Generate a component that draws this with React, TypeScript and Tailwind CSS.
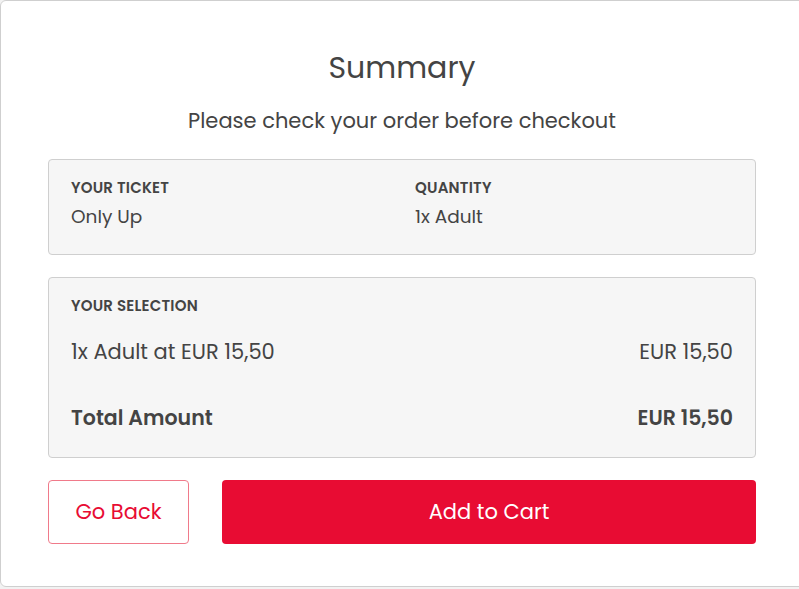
import React from "react";

const font = { fontFamily: "Poppins, 'Open Sans', 'Liberation Sans', sans-serif" };

function Label({ children }: { children: React.ReactNode }) {
  return (
    <p className="text-[15px] font-semibold uppercase tracking-[0.2px] text-[#444] leading-[20px]">
      {children}
    </p>
  );
}

export default function App() {
  return (
    <div className="w-full h-[589px] overflow-hidden bg-[#f2f2f2]" style={font}>
      <div className="w-[810px] h-[587px] bg-white border border-[#cfcfcf] rounded-[6px] pl-[47px] pt-[45px]">
        <div className="w-[708px]">
          <h1 className="text-center text-[30px] leading-[44px] text-[#444]">Summary</h1>
          <p className="text-center text-[21px] leading-[30px] text-[#444] mt-[16px]">
            Please check your order before checkout
          </p>

          <div className="mt-[23px] h-[96px] rounded-[4px] border border-[#cfcfcf] bg-[#f6f6f6] px-[22px] pt-[18px] grid grid-cols-2">
            <div>
              <Label>Your Ticket</Label>
              <p className="text-[18.5px] leading-[28px] text-[#444] mt-[5px]">Only Up</p>
            </div>
            <div className="pl-[13px]">
              <Label>Quantity</Label>
              <p className="text-[18.5px] leading-[28px] text-[#444] mt-[5px]">1x Adult</p>
            </div>
          </div>

          <div className="mt-[22px] h-[181px] rounded-[4px] border border-[#cfcfcf] bg-[#f6f6f6] px-[22px] pt-[18px]">
            <Label>Your Selection</Label>
            <div className="flex justify-between mt-[21px] text-[21px] leading-[30px] text-[#444]">
              <span>1x Adult at EUR 15,50</span>
              <span>EUR 15,50</span>
            </div>
            <div className="flex justify-between mt-[36px] text-[20.5px] leading-[30px] font-semibold text-[#444]">
              <span>Total Amount</span>
              <span>EUR 15,50</span>
            </div>
          </div>

          <div className="mt-[22px] flex gap-[33px]">
            <button className="w-[141px] h-[64px] rounded-[4px] border border-[#f07a8a] bg-white text-[#e80c33] text-[21px]">
              Go Back
            </button>
            <button className="flex-1 h-[64px] rounded-[4px] bg-[#e80c33] text-white text-[21px]">
              Add to Cart
            </button>
          </div>
        </div>
      </div>
    </div>
  );
}
